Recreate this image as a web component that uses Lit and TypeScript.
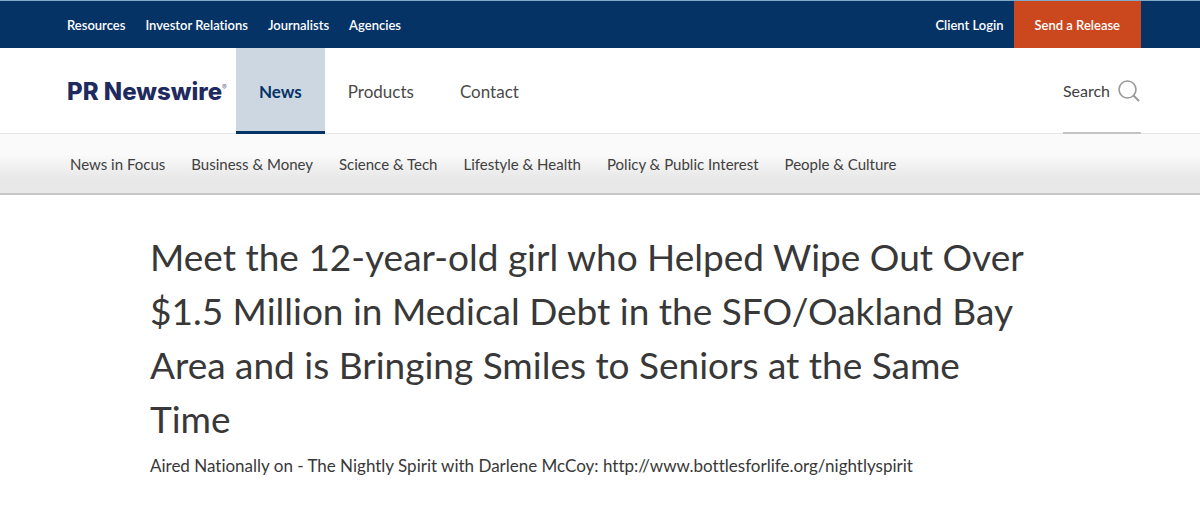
import { LitElement, html, css } from "lit";
import { customElement, property } from "lit/decorators.js";
import { classMap } from "lit/directives/class-map.js";

@customElement("site-header")
class SiteHeader extends LitElement {
  @property() current = "News";

  private utility = ["Resources", "Investor Relations", "Journalists", "Agencies"];
  private sections = ["News", "Products", "Contact"];
  private topics = [
    "News in Focus",
    "Business & Money",
    "Science & Tech",
    "Lifestyle & Health",
    "Policy & Public Interest",
    "People & Culture",
  ];

  static styles = css`
    :host { display: block; }
    * { box-sizing: border-box; }
    a { color: inherit; text-decoration: none; }
    .bar { display: flex; padding: 0 59px 0 67px; }
    .group { display: flex; }
    .end { margin-left: auto; }
    .utility {
      height: 48px;
      border-top: 1px solid #7fa8c9;
      background: #053366;
      color: #fff;
      font-size: 13px;
      font-weight: 600;
      align-items: stretch;
    }
    .utility .group { align-items: center; gap: 20px; }
    .utility .end { gap: 10px; }
    .release {
      align-self: stretch;
      display: flex;
      align-items: center;
      padding: 0 21px;
      background: #cb481e;
    }
    .main { height: 86px; border-bottom: 1px solid #e6e6e6; align-items: stretch; color: #4a4a4a; }
    .logo {
      display: flex;
      align-items: center;
      width: 169px;
      padding-top: 2px;
      color: #1f2a5f;
      font-family: Inter, Lato, sans-serif;
      font-size: 24px;
      font-weight: 800;
    }
    .mark { align-self: flex-start; margin-top: 28px; font-size: 7px; font-weight: 400; color: #6b7090; }
    .section {
      display: flex;
      align-items: center;
      padding: 4px 23px 0;
      font-size: 17px;
      border-bottom: 3px solid transparent;
      margin-bottom: -1px;
    }
    .active { background: #cdd7e1; border-color: #053366; color: #053366; font-weight: 700; }
    .search {
      display: flex;
      align-items: center;
      gap: 8px;
      margin: 0 0 -1px auto;
      padding: 2px 1px 0 0;
      border: 0;
      border-bottom: 2px solid #c4c4c4;
      background: none;
      color: #404040;
      font: inherit;
      font-size: 16px;
    }
    .topics {
      height: 61px;
      align-items: center;
      gap: 26px;
      padding-left: 70px;
      border-bottom: 2px solid #c6c6c6;
      background: linear-gradient(#fafafa 35%, #e8e8e8 75%);
      color: #404040;
      font-size: 15px;
    }
  `;

  render() {
    return html`
      <header>
        <div class="bar utility">
          <nav class="group" aria-label="Company">
            ${this.utility.map((t) => html`<a href="#">${t}</a>`)}
          </nav>
          <div class="group end">
            <a href="#">Client Login</a>
            <a class="release" href="#">Send a Release</a>
          </div>
        </div>
        <div class="bar main">
          <a class="logo" href="#">PR Newswire<span class="mark">®</span></a>
          <nav class="group" aria-label="Main">
            ${this.sections.map(
              (t) => html`<a href="#" class=${classMap({ section: true, active: t === this.current })}>${t}</a>`,
            )}
          </nav>
          <button class="search" type="button">
            Search
            <svg width="22" height="22" viewBox="0 0 22 22" fill="none" stroke="#999" stroke-width="1.6" aria-hidden="true">
              <circle cx="9.5" cy="9.5" r="8.5" />
              <path d="M15.5 15.5 L21 21" stroke-width="2" />
            </svg>
          </button>
        </div>
        <nav class="bar topics" aria-label="News topics">
          ${this.topics.map((t) => html`<a href="#">${t}</a>`)}
        </nav>
      </header>
    `;
  }
}

@customElement("app-root")
class AppRoot extends LitElement {
  static styles = css`
    :host {
      display: block;
      background: #fff;
      font-family: Lato, "Open Sans", sans-serif;
      font-size: 16px;
      line-height: 20px;
      font-variant-ligatures: none;
    }
    .article { max-width: 900px; margin: 0 auto; padding-top: 35px; color: #383838; }
    .title { margin: 0; padding-right: 16px; font-size: 37px; line-height: 54px; font-weight: 400; }
    .subtitle { margin: 8px 0 0; font-size: 17px; line-height: 24px; }
  `;

  render() {
    return html`
      <site-header></site-header>
      <main class="article">
        <h1 class="title">
          Meet the 12-year-old girl who Helped Wipe Out Over $1.5 Million in Medical Debt in the SFO/Oakland Bay
          Area and is Bringing Smiles to Seniors at the Same Time
        </h1>
        <p class="subtitle">
          Aired Nationally on - The Nightly Spirit with Darlene McCoy: http://www.bottlesforlife.org/nightlyspirit
        </p>
      </main>
    `;
  }
}
